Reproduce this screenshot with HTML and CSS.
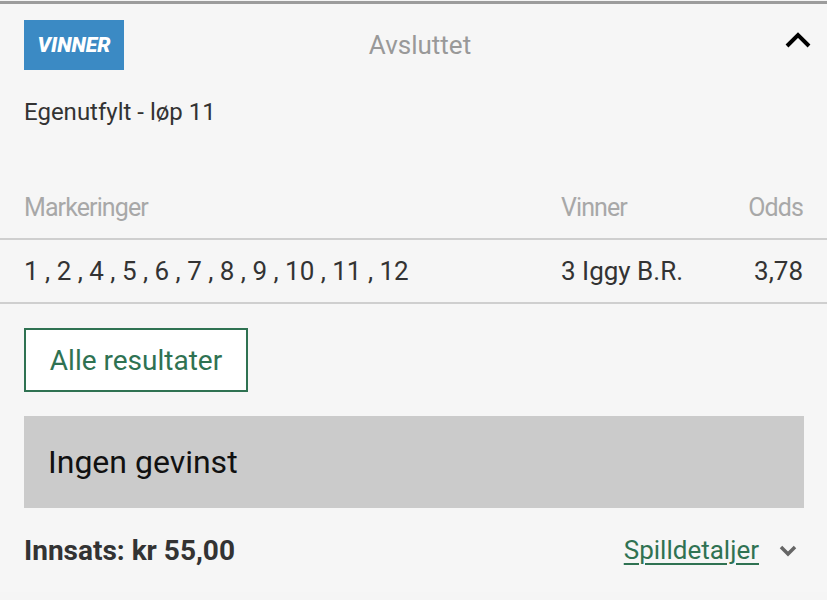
FILE: index.html
```html
<!DOCTYPE html>
<html lang="no">
<head>
<meta charset="utf-8">
<link rel="stylesheet" href="styles.css">
</head>
<body>
<div class="card">
  <div class="head">
    <span class="badge">VINNER</span>
    <span class="status">Avsluttet</span>
    <svg class="chev-up" width="26" height="16" viewBox="0 0 26 16"><path d="M2 14 L13 3 L24 14" fill="none" stroke="#000" stroke-width="4"/></svg>
  </div>
  <div class="title">Egenutfylt - løp 11</div>
  <div class="table">
    <div class="row th">
      <span>Markeringer</span><span>Vinner</span><span class="r">Odds</span>
    </div>
    <div class="row td">
      <span>1 , 2 , 4 , 5 , 6 , 7 , 8 , 9 , 10 , 11 , 12</span><span>3 Iggy B.R.</span><span class="r">3,78</span>
    </div>
  </div>
  <div class="actions">
    <button class="btn">Alle resultater</button>
  </div>
  <div class="result">Ingen gevinst</div>
  <div class="foot">
    <span class="stake">Innsats: kr 55,00</span>
    <span class="details"><a href="#">Spilldetaljer</a>
      <svg class="chev-down" width="18" height="12" viewBox="0 0 18 12"><path d="M2 2 L9 9 L16 2" fill="none" stroke="#666" stroke-width="3.5"/></svg>
    </span>
  </div>
</div>
</body>
</html>
```
FILE: styles.css
```css
* { box-sizing: border-box; }
html, body { margin: 0; padding: 0; }
body {
  background: #f5f5f5;
  font-family: Roboto, "Liberation Sans", sans-serif;
  color: #333;
  width: 827px;
  height: 600px;
  overflow: hidden;
}
.card {
  margin-top: 1px;
  border-top: 3px solid #9c9c9c;
  background: #f6f6f6;
}
.head {
  display: flex;
  align-items: center;
  padding: 16px 16px 0 24px;
  height: 66px;
}
.badge {
  width: 100px;
  height: 50px;
  background: #3b8ac4;
  color: #fff;
  font-weight: 900;
  font-style: italic;
  font-size: 21px;
  display: flex;
  align-items: center;
  justify-content: center;
}
.status {
  flex: 1;
  text-align: center;
  color: #999;
  font-size: 26px;
  padding-right: 69px;
}
.chev-up { margin-top: -10px; }
.title {
  padding: 28px 24px 0;
  font-size: 24px;
  line-height: 28px;
  color: #333;
}
.table { margin-top: 62px; }
.row {
  display: grid;
  grid-template-columns: 1fr 126px 116px;
  padding: 0 24px;
  align-items: center;
  white-space: nowrap;
}
.row .r { text-align: right; }
.th {
  color: #a8a8a8;
  height: 52px;
  align-items: start;
  border-bottom: 2px solid #cfcfcf;
  font-size: 25px;
  letter-spacing: -0.9px;
  line-height: 28px;
  padding-top: 6px;
}
.td {
  height: 64px;
  color: #333;
  font-size: 26px;
  border-bottom: 2px solid #cfcfcf;
}
.actions { padding: 24px 24px 0; }
.btn {
  font-family: inherit;
  width: 224px;
  height: 64px;
  background: #fff;
  border: 2px solid #2f7252;
  color: #2f7252;
  font-size: 28px;
  padding: 0;
  margin: 0;
  display: block;
}
.result {
  margin: 24px 23px 0 24px;
  height: 92px;
  background: #cbcbcb;
  color: #111;
  font-size: 32px;
  display: flex;
  align-items: center;
  padding-left: 24px;
}
.foot {
  display: flex;
  align-items: center;
  justify-content: space-between;
  padding: 0 30px 0 24px;
  height: 84px;
}
.stake {
  font-weight: 700;
  font-size: 28px;
  color: #333;
}
.details { display: flex; align-items: center; gap: 20px; }
.details a {
  color: #2f7252;
  font-size: 26px;
  text-decoration: underline;
  text-decoration-thickness: 2px;
  text-underline-offset: 4px;
}
.chev-down { margin-top: 2px; }
```
